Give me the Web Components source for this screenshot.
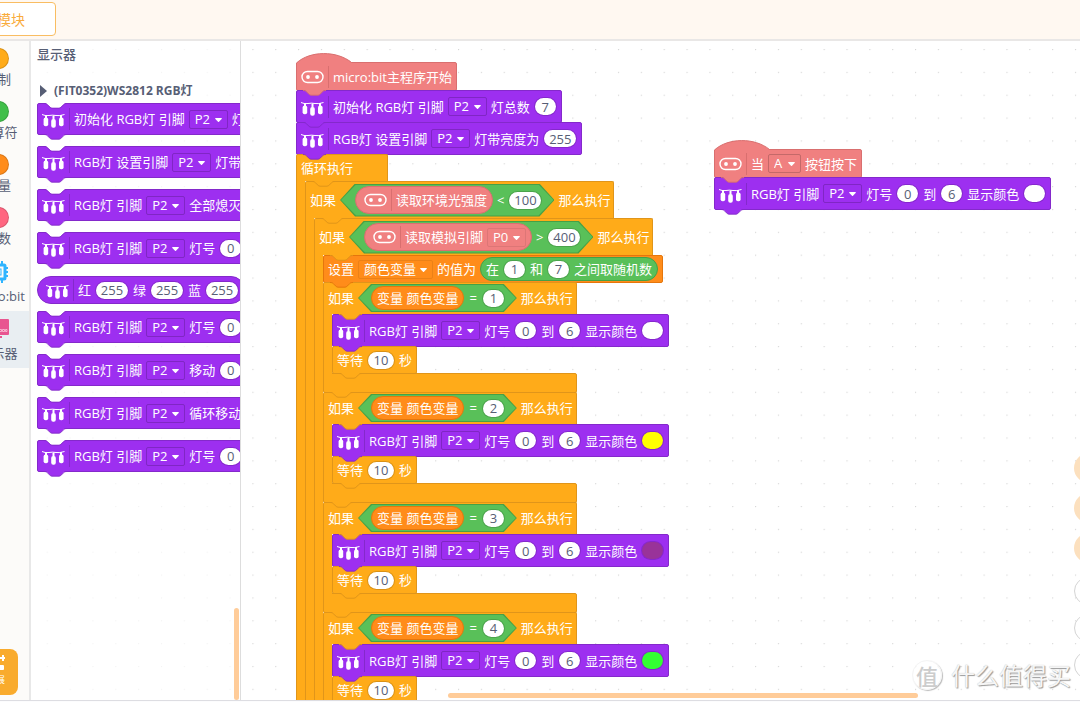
<!DOCTYPE html>
<html lang="zh-CN">
<head>
<meta charset="utf-8">
<title>模块编程</title>
<style>
html,body{height:100%;margin:0}
body{font:13px/18px "Open Sans","Noto Sans CJK SC",sans-serif;color:#575e75;overflow:hidden;background:#fff}
</style>
</head>
<body>
<app-shell></app-shell>

<template id="t-app">
<style>
:host{display:flex;flex-direction:column;height:100vh;overflow:hidden;background:#fcfcfd}
header{flex:none;background:#fff8f1;border-bottom:2px solid #e9e7e6;display:flex;align-items:flex-start;padding:2px 0 3px}
header button{margin:0 0 0 -20px;width:76px;height:34px;padding:0 30px 0 0;text-align:right;border:1px solid #f9bd62;border-radius:4px;background:#fff;color:#f9ab3c;font:14px/20px "Noto Sans CJK SC",sans-serif;white-space:nowrap}
main{flex:1;min-height:0;display:flex;position:relative;background:#fff;border-bottom:1px solid #dddde2;margin-bottom:1px}
.grid{position:absolute;inset:0;width:100%;height:100%}
nav{flex:none;width:64px;margin-left:-33px;background:#fcfbf9;border-right:2px solid #e8e8e8;display:flex;flex-direction:column;padding-top:1px;box-sizing:border-box;position:relative}
.ext{margin:auto auto 5px 11px;width:40px;height:46px;border:0;border-radius:8px;background:#f9ab2d;color:#fff;padding:5px 13px 0 0;display:flex;flex-direction:column;align-items:flex-end;font:9px/12px "Noto Sans CJK SC",sans-serif}
.ext svg{flex:none}
.ext span{white-space:nowrap}
aside{flex:none;width:210px;box-sizing:border-box;background:rgba(255,255,255,.7);border-right:1px solid #ddd;padding:4px 0 0 6px;overflow:hidden;position:relative}
h2{margin:0;font:500 13px/18px "Noto Sans CJK SC",sans-serif}
details{margin-top:19px}
summary{list-style:none;display:flex;align-items:center;gap:7px;font-weight:700;font-size:12px;padding-left:3px;white-space:nowrap}
.list{display:flex;flex-direction:column;align-items:flex-start;gap:11px;margin-top:3px}
.list ws-block{flex:none;margin-bottom:0;min-width:220px;height:32px}
.list ws-block[shape=pill]{height:28px;margin:1px 0 -4px;min-width:0}
.bar{position:absolute;background:#ffcc99;border-radius:3px}
.v{right:1px;width:5px;top:567px;bottom:0}
section{flex:1;min-width:0;position:relative;overflow:hidden}
.h{left:207px;width:470px;height:5px;bottom:2px}
.script{position:absolute;display:flex;flex-direction:column;align-items:flex-start}
.s1{left:55px;top:21px}
.s2{left:473px;top:108px}
.tools{position:absolute;right:-24px;top:412px;display:flex;flex-direction:column;gap:10px}
.tools button{width:30px;height:30px;padding:0;border:0;border-radius:50%;background:#fce0be}
.tools .o{background:#fff;border:1px solid #d4d4d4;height:28px;width:28px}
.zoomers{display:flex;flex-direction:column;gap:9px;margin-top:4px}
.wm{position:absolute;right:9px;bottom:7px;display:flex;align-items:center;gap:9px;color:#f6f6f6;font:24px/36px "Noto Sans CJK SC",sans-serif;text-shadow:1px 1px 1px #999,0 0 1px #bbb;white-space:nowrap}
.wm b{font-weight:500;font-size:22px;line-height:28px;width:28px;height:28px;text-align:center;border:1px solid #f4f4f4;border-radius:50%;box-shadow:1px 1px 1px #bbb;color:#ccc;text-shadow:none}
</style>
<header><button>模块</button></header>
<main>
<svg class="grid" aria-hidden="true"><defs><pattern id="dots" width="40" height="40" patternUnits="userSpaceOnUse" patternTransform="translate(1 8) scale(.57125)"><rect width="2" height="2" fill="#d6d6d6"/></pattern></defs><rect width="100%" height="100%" fill="url(#dots)"/></svg>
<nav>
<side-item label="控制" color="#ffab19"></side-item>
<side-item label="运算符" color="#40bf4a"></side-item>
<side-item label="变量" color="#ff8c1a"></side-item>
<side-item label="函数" color="#ff6680"></side-item>
<side-item label="micro:bit" icon="chip"></side-item>
<side-item label="显示器" icon="screen" selected></side-item>
<button class="ext" aria-label="扩展"><svg width="12" height="20" viewBox="0 0 12 20" fill="#fff"><path d="M9 1h2v2h2v2h-2v2H9V5H7V3h2z"/><rect x="5" y="11" width="6" height="5" rx="1"/></svg><span>扩展</span></button>
</nav>
<aside>
<h2>显示器</h2>
<details>
<summary><svg width="7" height="12" viewBox="0 0 7 12"><path d="M0 0l7 6-7 6z" fill="#575e75"/></svg>(FIT0352)WS2812 RGB灯</summary>
</details>
<div class="list" id="palette"></div>
<div class="bar v"></div>
</aside>
<section>
<div class="script s1" id="main"></div>
<div class="script s2">
<ws-block shape="hat" kind="salmon" icon="bit"><span>当</span><field-select value="A" w="33"></field-select><span>按钮按下</span></ws-block>
<ws-block kind="purple" icon="lamp" above="salmon" tail><span>RGB灯 引脚</span><field-select value="P2"></field-select><span>灯号</span><field-input value="0"></field-input><span>到</span><field-input value="6"></field-input><span>显示颜色</span><field-color value="#ffffff"></field-color></ws-block>
</div>
<div class="bar h"></div>
<div class="tools"><button aria-label="工具一"></button><button aria-label="工具二"></button><button aria-label="工具三"></button><div class="zoomers"><button class="o" aria-label="放大"></button><button class="o" aria-label="缩小"></button><button class="o" aria-label="还原"></button></div></div>
<div class="wm"><b>值</b><span>什么值得买</span></div>
</section>
</main>
</template>

<template id="t-item">
<style>
:host{display:flex;flex-direction:column;align-items:center;box-sizing:border-box;height:53px;padding-top:6px;gap:2px}
:host([icon]){height:57px;padding-top:7px;gap:5px}
:host([selected]){background:#e9eef2}
i{width:21px;height:21px;border-radius:50%;box-sizing:border-box;border:1px solid rgba(0,0,0,.15);background:var(--c)}
:host([icon]) i{display:none}
svg{display:none;width:22px;height:22px}
:host([icon=chip]) .chip,:host([icon=screen]) .screen{display:block}
a{color:inherit;text-decoration:none;line-height:16px;white-space:nowrap}
</style>
<i></i>
<svg class="chip" viewBox="0 0 22 22" fill="none" stroke="#2fb4ff"><rect x="4" y="4" width="14" height="14" rx="1" stroke-width="3"/><rect x="8" y="8" width="6" height="6"/><path stroke-width="2" d="M7 0v4M11 0v4M15 0v4M7 18v4M11 18v4M15 18v4M0 7h4M0 11h4M0 15h4M18 7h3M18 11h3M18 15h3"/></svg>
<svg class="screen" viewBox="0 0 22 22"><rect x="0" y="1" width="22" height="16" rx="1" fill="#e85590"/><path d="M7 19h8" stroke="#e85590" stroke-width="2"/><path d="M12.500 11.500h2v2h-2zM15.500 11.500h2v2h-2zM18.500 11.500h1.500v2h-1.500z" fill="none" stroke="#fbc6da" stroke-width=".8"/></svg>
<a href="#"></a>
</template>

<template id="t-block">
<style>
:host{--bg:#9d2ff0;--line:#8429cb;display:flex;align-items:center;gap:4px;box-sizing:border-box;position:relative;height:33px;margin-bottom:-1px;padding:0 4px;background:var(--bg);border:1px solid var(--line);border-radius:2px;color:#fff;white-space:nowrap;isolation:isolate}
:host([kind=salmon]){--bg:#f08080;--line:#d96f6f}
:host([kind=orange]){--bg:#ffab19;--line:#e0951a}
:host([kind=dark]){--bg:#ff8c1a;--line:#e5760c}
:host([kind=green]){--bg:#59c059;--line:#46a046}
:host([shape=hat]){height:29px}
:host([small]){height:28px}
:host([shape=pill]){height:24px;border-radius:14px;margin:0;padding:0 5px}
:host([shape=pill][icon]){height:28px;padding:0 5px 0 8px}
:host([shape=diamond]){background:none;border:0;margin:0;height:28px;padding:0 12px 0 13px;--s:13px;gap:5px}
:host([shape=diamond][tall]){height:33px;padding-left:15px;--s:15px;gap:4px}
.d{display:none;position:absolute;z-index:-1;clip-path:polygon(var(--s) 0,calc(100% - var(--s)) 0,100% 50%,calc(100% - var(--s)) 100%,var(--s) 100%,0 50%)}
:host([shape=diamond]) .d{display:block}
.d1{inset:0;background:var(--line)}.d2{inset:1px;background:var(--bg)}
.ico{display:none;flex:none;width:23px;height:20px}
:host([icon=lamp]) .lamp,:host([icon=bit]) .bit{display:block}
.sep{display:none;width:1px;height:22px;background:var(--line)}
:host([icon]) .sep{display:block}
.n{display:none;position:absolute;left:5px;width:24px;height:6px;overflow:visible}
.top{top:-1px}
.bot{bottom:-6px}
:host([above]) .top,:host([tail]) .bot{display:block}
.hat{display:none;position:absolute;left:-1px;top:-10px;width:57px;height:11px}
:host([shape=hat]) .hat{display:block}
</style>
<div class="d d1"></div><div class="d d2"></div>
<svg class="hat" viewBox="0 0 57 11"><path d="M.5 11V10C14-2.500 41-2.500 55.500 9.500L57 11z" fill="var(--bg)"/><path d="M.5 11V10C14-2.500 41-2.500 55.500 9.500" fill="none" stroke="var(--line)"/></svg>
<svg class="n top" viewBox="0 0 24 6"><path class="f" d="M1 0C3 0 3.500.6 4.500 1.600L7 4c.6.5 1 1 2 1h7c1 0 1.400-.5 2-1l2.500-2.400C21.500.6 22 0 24 0z"/><path class="l" fill="none" d="M1 .5C3 .5 3.500.9 4.500 1.900L7 4.200c.6.5 1 1 2 1h7c1 0 1.400-.5 2-1l2.500-2.300C21.500.9 22 .5 24 .5"/></svg>
<svg class="n bot" viewBox="0 0 24 6"><path fill="var(--bg)" d="M1 0C3 0 3.500.6 4.500 1.600L7 4c.6.5 1 1 2 1h7c1 0 1.400-.5 2-1l2.500-2.400C21.500.6 22 0 24 0z"/><path fill="none" stroke="var(--line)" d="M1 .5C3 .5 3.500.9 4.500 1.900L7 4.200c.6.5 1 1 2 1h7c1 0 1.400-.5 2-1l2.500-2.300C21.500.9 22 .5 24 .5"/></svg>
<svg class="ico lamp" viewBox="0 0 23 20" fill="#fff"><path d="M0 5.500Q3.500 7.200 7 6.500T14 6.500T22.500 5.500" fill="none" stroke="#fff"/><path d="M3 6h2v3h-2zM10.500 6.500h2v4h-2zM18 6h2v3h-2z"/><rect x="1.600" y="8.500" width="4.600" height="8.800" rx="2"/><rect x="9.200" y="10" width="4.600" height="8.800" rx="2"/><rect x="17" y="8.500" width="4.600" height="8.800" rx="2"/></svg>
<svg class="ico bit" viewBox="0 0 23 20"><rect x="1" y="4.500" width="21" height="11" rx="5.500" fill="none" stroke="#fff" stroke-width="1.400"/><circle cx="7" cy="10" r="1.900" fill="#fff"/><circle cx="16" cy="10" r="1.900" fill="#fff"/></svg>
<div class="sep"></div>
<slot></slot>
</template>

<template id="t-c">
<style>
:host{--bg:#ffab19;--line:#e0951a;display:flex;flex-direction:column;align-items:flex-start;color:#fff;white-space:nowrap;position:relative}
.head{display:flex;align-items:center;gap:4px;box-sizing:border-box;height:32px;padding:0 3px 1px 4px;background:var(--bg);border:1px solid var(--line);border-bottom:0;border-radius:2px 2px 0 0;position:relative}
:host([tall]) .head{height:37px;padding-bottom:0}
:host([loop]) .head{height:27px;width:92px}
.body{display:flex}
.arm{flex:none;box-sizing:border-box;width:9px;background:var(--bg);border-left:1px solid var(--line);position:relative;margin-bottom:-1px;z-index:1}
.in{display:flex;flex-direction:column;align-items:flex-start}
.foot{box-sizing:border-box;height:20px;margin-bottom:-1px;width:254px;background:var(--bg);border:1px solid var(--line);border-radius:0 2px 2px 2px;position:relative}
:host([open]) .foot{display:none}
svg{position:absolute;left:5px;top:-1px;width:24px;height:6px}
.foot svg{left:14px}
</style>
<div class="head"><svg class="n" viewBox="0 0 24 6"><path class="f" d="M1 0C3 0 3.500.6 4.500 1.600L7 4c.6.5 1 1 2 1h7c1 0 1.400-.5 2-1l2.500-2.400C21.500.6 22 0 24 0z"/><path class="l" fill="none" d="M1 .5C3 .5 3.500.9 4.500 1.900L7 4.200c.6.5 1 1 2 1h7c1 0 1.400-.5 2-1l2.500-2.300C21.500.9 22 .5 24 .5"/></svg><slot name="head"></slot></div>
<div class="body"><div class="arm"></div><div class="in"><slot></slot></div></div>
<div class="foot"><svg viewBox="0 0 24 6"><path fill="var(--bg)" d="M1 0C3 0 3.500.6 4.500 1.600L7 4c.6.5 1 1 2 1h7c1 0 1.400-.5 2-1l2.500-2.400C21.500.6 22 0 24 0z"/><path fill="none" stroke="var(--line)" d="M1 .5C3 .5 3.500.9 4.500 1.900L7 4.200c.6.5 1 1 2 1h7c1 0 1.400-.5 2-1l2.500-2.300C21.500.9 22 .5 24 .5"/></svg></div>
</template>

<template id="t-select">
<style>
:host{display:block;position:relative;flex:none;height:19px}
select{display:block;appearance:none;box-sizing:border-box;width:100%;height:19px;margin:0;padding:0 0 0 5px;border:1px solid rgba(0,0,0,.18);border-radius:2px;background:transparent;color:#fff;font:13px/17px "Open Sans","Noto Sans CJK SC",sans-serif}
svg{position:absolute;right:6px;top:8px;width:7px;height:4px;pointer-events:none}
:host([soft]) select{border-color:rgba(0,0,0,.08)}
</style>
<select><option></option></select><svg viewBox="0 0 7 4"><path d="M.6 0h5.800q.8.200.2.900L4 3.700q-.5.400-1 0L.4.900Q-.2.200.6 0z" fill="#fff"/></svg>
</template>

<template id="t-input">
<style>
:host{display:block;flex:none}
input{display:block;box-sizing:border-box;width:var(--w);height:19px;margin:0;padding:0;border:1px solid rgba(0,0,0,.15);border-radius:10px;background:#fff;background-clip:padding-box;color:#575e75;text-align:center;font:13px/17px "Open Sans","Noto Sans CJK SC",sans-serif}
</style>
<input>
</template>

<template id="t-color">
<style>
:host{display:block;flex:none}
button{display:block;box-sizing:border-box;width:23px;height:19px;margin:0;padding:0;border:1px solid rgba(0,0,0,.15);border-radius:10px;background:var(--c);background-clip:padding-box}
</style>
<button></button>
</template>

<script>
const FILL = {purple:'#9d2ff0', salmon:'#f08080', orange:'#ffab19', dark:'#ff8c1a', white:'#fff'};
const LINE = {purple:'#8429cb', salmon:'#d96f6f', orange:'#e0951a', dark:'#e5760c', white:'#8429cb'};

class Base extends HTMLElement {
  connectedCallback() {
    if (this.shadowRoot) return;
    const root = this.attachShadow({mode:'open'});
    root.append(document.getElementById(this.constructor.tpl).content.cloneNode(true));
    this.ready(root);
  }
  ready() {}
  paintNotch(root) {
    const a = this.getAttribute('above') || 'orange';
    root.querySelector('.n .f').setAttribute('fill', FILL[a]);
    root.querySelector('.n .l').setAttribute('stroke', LINE[a]);
  }
}
class WsBlock extends Base { static tpl = 't-block'; ready(r) { this.paintNotch(r); } }
class CBlock extends Base { static tpl = 't-c'; ready(r) { this.paintNotch(r); } }
class SideItem extends Base {
  static tpl = 't-item';
  ready(r) {
    r.querySelector('a').textContent = this.getAttribute('label');
    this.style.setProperty('--c', this.getAttribute('color') || 'none');
  }
}
class FieldSelect extends Base {
  static tpl = 't-select';
  ready(r) {
    this.style.width = (this.getAttribute('w') || 39) + 'px';
    r.querySelector('option').textContent = this.getAttribute('value');
    r.querySelector('select').setAttribute('aria-label', '选项');
  }
}
class FieldInput extends Base {
  static tpl = 't-input';
  ready(r) {
    const v = this.getAttribute('value'), i = r.querySelector('input');
    i.value = v; i.setAttribute('aria-label', '数值');
    this.style.setProperty('--w', [0, 23, 28, 34][v.length] + 'px');
  }
}
class FieldColor extends Base {
  static tpl = 't-color';
  ready(r) {
    this.style.setProperty('--c', this.getAttribute('value'));
    r.querySelector('button').setAttribute('aria-label', '颜色');
  }
}

const t = s => `<span>${s}</span>`;
const pin = '<field-select value="P2"></field-select>';
const num = n => `<field-input value="${n}"></field-input>`;
const lamp = (attrs, body) => `<ws-block kind="purple" icon="lamp" ${attrs}>${body}</ws-block>`;
const range = (color, above) => lamp(`above="${above}"`, t('RGB灯 引脚') + pin + t('灯号') + num(0) + t('到') + num(6) + t('显示颜色') + `<field-color value="${color}"></field-color>`);
const branch = (n, color, above, open) => `
<c-block above="${above}" ${open ? 'open' : ''}>
<span slot="head">如果</span>
<ws-block slot="head" shape="diamond" kind="green"><ws-block shape="pill" kind="dark">${t('变量 颜色变量')}</ws-block>${t('=')}${num(n)}</ws-block>
<span slot="head">那么执行</span>
${range(color, 'orange')}
<ws-block kind="orange" above="purple" small>${t('等待')}${num(10)}${t('秒')}</ws-block>
</c-block>`;

class AppShell extends Base {
  static tpl = 't-app';
  ready(r) {
    const p = (body) => lamp('above="white" tail', body);
    r.getElementById('palette').innerHTML =
      p(t('初始化 RGB灯 引脚') + pin + t('灯总数')) +
      p(t('RGB灯 设置引脚') + pin + t('灯带亮度为')) +
      p(t('RGB灯 引脚') + pin + t('全部熄灭')) +
      p(t('RGB灯 引脚') + pin + t('灯号') + num(0)) +
      lamp('shape="pill"', t('红') + num(255) + t('绿') + num(255) + t('蓝') + num(255)) +
      p(t('RGB灯 引脚') + pin + t('灯号') + num(0)) +
      p(t('RGB灯 引脚') + pin + t('移动') + num(0)) +
      p(t('RGB灯 引脚') + pin + t('循环移动')) +
      p(t('RGB灯 引脚') + pin + t('灯号') + num(0));
    r.getElementById('main').innerHTML = `
<ws-block shape="hat" kind="salmon" icon="bit">${t('micro:bit主程序开始')}</ws-block>
${lamp('above="salmon"', t('初始化 RGB灯 引脚') + pin + t('灯总数') + num(7))}
${lamp('above="purple"', t('RGB灯 设置引脚') + pin + t('灯带亮度为') + num(255))}
<c-block loop open above="purple">
<span slot="head">循环执行</span>
<c-block tall open>
<span slot="head">如果</span>
<ws-block slot="head" shape="diamond" tall kind="green"><ws-block shape="pill" kind="salmon" icon="bit">${t('读取环境光强度')}</ws-block>${t('&lt;')}${num(100)}</ws-block>
<span slot="head">那么执行</span>
<c-block tall open>
<span slot="head">如果</span>
<ws-block slot="head" shape="diamond" tall kind="green"><ws-block shape="pill" kind="salmon" icon="bit">${t('读取模拟引脚')}<field-select value="P0" soft></field-select></ws-block>${t('&gt;')}${num(400)}</ws-block>
<span slot="head">那么执行</span>
<ws-block kind="dark" above="orange" small>${t('设置')}<field-select value="颜色变量" w="75" soft></field-select>${t('的值为')}<ws-block shape="pill" kind="green">${t('在')}${num(1)}${t('和')}${num(7)}${t('之间取随机数')}</ws-block></ws-block>
${branch(1, '#ffffff', 'dark')}
${branch(2, '#ffff00', 'orange')}
${branch(3, '#993399', 'orange')}
${branch(4, '#33ff33', 'orange', true)}
</c-block>
</c-block>
</c-block>`;
  }
}
customElements.define('ws-block', WsBlock);
customElements.define('c-block', CBlock);
customElements.define('side-item', SideItem);
customElements.define('field-select', FieldSelect);
customElements.define('field-input', FieldInput);
customElements.define('field-color', FieldColor);
customElements.define('app-shell', AppShell);
</script>
</body>
</html>
